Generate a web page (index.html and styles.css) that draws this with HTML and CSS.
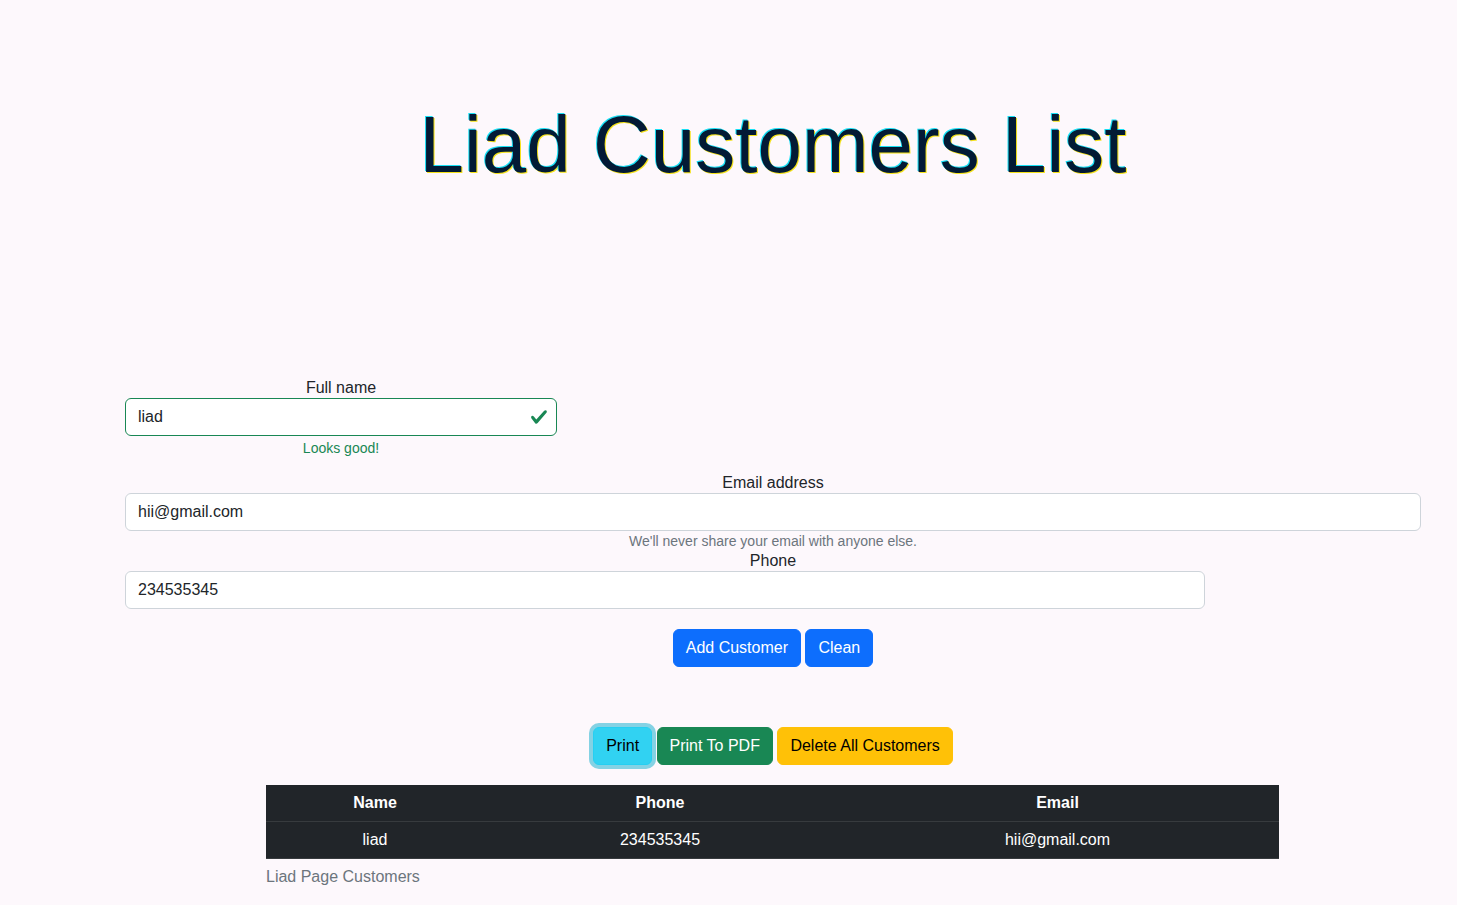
FILE: index.html
```html
<!DOCTYPE html>
<html lang="en">
<head>
<meta charset="utf-8">
<title>Liad Customers List</title>
<link rel="stylesheet" href="styles.css">
</head>
<body>
  <main class="page">
    <h1 class="title">Liad Customers List</h1>

    <form class="customer-form">
      <div class="field field-name">
        <label class="label" for="fullname">Full name</label>
        <div class="input-wrap">
          <input id="fullname" class="input input-valid" type="text" value="liad">
          <svg class="valid-icon" viewBox="0 0 8 8" aria-hidden="true"><path fill="#198754" d="M2.3 6.73.6 4.53c-.4-1.04.46-1.4 1.1-.8l1.1 1.4 3.4-3.8c.6-.63 1.6-.27 1.2.7l-4 4.6c-.43.5-.8.4-1.1.1z"/></svg>
        </div>
        <div class="feedback">Looks good!</div>
      </div>

      <div class="field field-email">
        <label class="label" for="email">Email address</label>
        <input id="email" class="input" type="email" value="hii@gmail.com">
        <div class="form-text">We'll never share your email with anyone else.</div>
      </div>

      <div class="field field-phone">
        <label class="label label-phone" for="phone">Phone</label>
        <input id="phone" class="input input-phone" type="text" value="234535345">
      </div>

      <div class="actions">
        <button type="button" class="btn btn-primary">Add Customer</button>
        <button type="button" class="btn btn-primary">Clean</button>
      </div>
    </form>

    <div class="tools">
      <button type="button" class="btn btn-info is-focused">Print</button>
      <button type="button" class="btn btn-success">Print To PDF</button>
      <button type="button" class="btn btn-warning">Delete All Customers</button>
    </div>

    <table class="customers">
      <caption class="caption">Liad Page Customers</caption>
      <thead>
        <tr>
          <th class="col-name">Name</th>
          <th class="col-phone">Phone</th>
          <th class="col-email">Email</th>
        </tr>
      </thead>
      <tbody>
        <tr>
          <td>liad</td>
          <td>234535345</td>
          <td>hii@gmail.com</td>
        </tr>
      </tbody>
    </table>
  </main>
</body>
</html>
```

FILE: styles.css
```css
* {
  box-sizing: border-box;
}

body {
  margin: 0;
  background: #fdf8fc;
  color: #212529;
  font-family: "Liberation Sans", Arial, sans-serif;
  font-size: 16px;
  line-height: 1.5;
}

.page {
  width: 1296px;
  margin: 0 0 0 125px;
  padding-top: 97px;
}

.title {
  margin: 0 0 184px;
  text-align: center;
  font-size: 80px;
  font-weight: 300;
  line-height: 96px;
  color: #031a35;
  text-shadow: -1px -1px 0 #18e0f5, 1px 1px 0 #f4e21a;
}

.customer-form {
  margin: 0;
}

.label {
  display: block;
  text-align: center;
  line-height: 21px;
}

.field-name {
  width: 432px;
}

.input-wrap {
  position: relative;
}

.input {
  display: block;
  width: 100%;
  height: 38px;
  padding: 6px 12px;
  font-family: inherit;
  font-size: 16px;
  line-height: 24px;
  color: #212529;
  background: #fff;
  border: 1px solid #ced4da;
  border-radius: 6px;
  outline: none;
}

.input-valid {
  border-color: #198754;
  padding-right: 36px;
}

.valid-icon {
  position: absolute;
  right: 9px;
  top: 10px;
  width: 18px;
  height: 18px;
}

.feedback {
  text-align: center;
  font-size: 14px;
  line-height: 18px;
  padding-top: 3px;
  margin-bottom: 15px;
  color: #198754;
}

.form-text {
  text-align: center;
  font-size: 14px;
  line-height: 19px;
  padding-top: 1px;
  color: #6c757d;
}

.label-phone {
  line-height: 20px;
}

.input-phone {
  width: 1080px;
}

.actions {
  margin-top: 20px;
  text-align: center;
  line-height: 0;
}

.tools {
  margin-top: 60px;
  text-align: center;
  line-height: 0;
}

.btn {
  display: inline-block;
  height: 38px;
  padding: 6px 12px;
  font-family: inherit;
  font-size: 16px;
  line-height: 24px;
  border: 1px solid transparent;
  border-radius: 6px;
  vertical-align: top;
  cursor: pointer;
}

.btn-primary {
  background: #0d6efd;
  border-color: #0d6efd;
  color: #fff;
}

.btn-info {
  background: #31d2f2;
  border-color: #25cff2;
  color: #000;
}

.is-focused {
  box-shadow: 0 0 0 4px rgba(11, 172, 204, 0.5);
}

.btn-success {
  background: #198754;
  border-color: #198754;
  color: #fff;
}

.btn-warning {
  background: #ffc107;
  border-color: #ffc107;
  color: #000;
}

.customers {
  width: 1013px;
  margin: 20px 0 0 141px;
  border-collapse: collapse;
  background: #212529;
  color: #fff;
}

.customers th,
.customers td {
  padding: 6px 8px;
  text-align: center;
  line-height: 24px;
  border-bottom: 1px solid #373b3e;
}

.customers th {
  font-weight: 700;
}

.col-name {
  width: 218px;
}

.col-phone {
  width: 352px;
}

.col-email {
  width: 443px;
}

.caption {
  caption-side: bottom;
  text-align: left;
  color: #6c757d;
  padding-top: 6px;
  line-height: 24px;
}
```
